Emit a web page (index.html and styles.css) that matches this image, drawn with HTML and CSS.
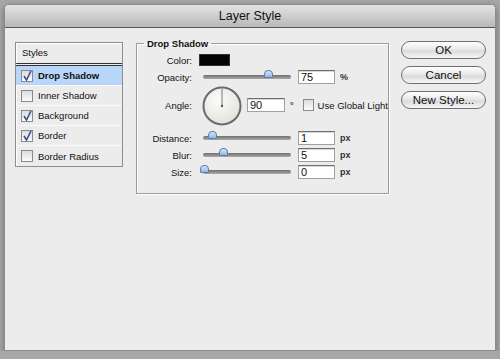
FILE: index.html
```html
<!DOCTYPE html>
<html>
<head>
	<meta charset="utf-8">
	<title>Layer Style</title>
	<link rel="stylesheet" href="styles.css">
</head>
<body>
<div class="window">
	<div class="titlebar">Layer Style</div>
	<div class="content">
		<div class="styles">
			<div class="styles-head">Styles</div>
			<ul class="style-list">
				<li class="selected"><span class="check"><svg width="9" height="10" viewBox="0 0 9 10"><path d="M1 5 L3.5 9 L8 0" fill="none" stroke="#3b4f95" stroke-width="1.6"/></svg></span><b>Drop Shadow</b></li>
				<li><span class="check"></span>Inner Shadow</li>
				<li><span class="check"><svg width="9" height="10" viewBox="0 0 9 10"><path d="M1 5 L3.5 9 L8 0" fill="none" stroke="#3b4f95" stroke-width="1.6"/></svg></span>Background</li>
				<li><span class="check"><svg width="9" height="10" viewBox="0 0 9 10"><path d="M1 5 L3.5 9 L8 0" fill="none" stroke="#3b4f95" stroke-width="1.6"/></svg></span>Border</li>
				<li><span class="check"></span>Border Radius</li>
			</ul>
		</div>

		<fieldset class="group">
			<legend>Drop Shadow</legend>
			<div class="row">
				<label>Color:</label>
				<span class="swatch"></span>
			</div>
			<div class="row">
				<label>Opacity:</label>
				<span class="slider"><span class="thumb" style="left: 61px"></span></span>
				<span class="num">75</span>
				<span class="unit">%</span>
			</div>
			<div class="row angle">
				<label>Angle:</label>
				<svg class="dial" width="40" height="40" viewBox="0 0 40 40">
					<defs>
						<radialGradient id="dialfill" cx="0.4" cy="0.35" r="0.7">
							<stop offset="0" stop-color="#fbfbf8"/>
							<stop offset="1" stop-color="#e2e2dc"/>
						</radialGradient>
					</defs>
					<circle cx="20" cy="20" r="18.5" fill="url(#dialfill)" stroke="#6a6a6a" stroke-width="2"/>
					<line x1="20" y1="20" x2="20" y2="3" stroke="#777" stroke-width="1"/>
					<circle cx="20" cy="20" r="1.2" fill="#555"/>
				</svg>
				<span class="num wide">90</span>
				<span class="unit deg">°</span>
				<span class="box"></span>
				<span class="opt">Use Global Light</span>
			</div>
			<div class="row">
				<label>Distance:</label>
				<span class="slider"><span class="thumb" style="left: 5px"></span></span>
				<span class="num">1</span>
				<span class="unit">px</span>
			</div>
			<div class="row">
				<label>Blur:</label>
				<span class="slider"><span class="thumb" style="left: 16px"></span></span>
				<span class="num">5</span>
				<span class="unit">px</span>
			</div>
			<div class="row">
				<label>Size:</label>
				<span class="slider"><span class="thumb" style="left: -3px"></span></span>
				<span class="num">0</span>
				<span class="unit">px</span>
			</div>
		</fieldset>

		<div class="buttons">
			<button class="btn">OK</button>
			<button class="btn">Cancel</button>
			<button class="btn">New Style...</button>
		</div>
	</div>
</div>
</body>
</html>
```

FILE: styles.css
```css
*{
	padding: 0px;
	margin: 0px;
	box-sizing: border-box;
}
body{
	background-color: #a7a7a7;
	font-family: "Liberation Sans", Arial, sans-serif;
	font-size: 9.5px;
	color: #111;
	padding: 4px 4px 0 4px;
}
.window{
	width: 492px;
	height: 347px;
	background-color: #ececec;
	border: 1px solid #8c8c8c;
	border-radius: 5px 5px 0 0;
	box-shadow: 0 2px 6px rgba(0, 0, 0, 0.35);
}
.titlebar{
	height: 23px;
	line-height: 23px;
	text-align: center;
	font-size: 12.5px;
	color: #111;
	background: linear-gradient(#e4e4e4, #b8b8b8);
	border-bottom: 1px solid #555;
	border-radius: 4px 4px 0 0;
}
.content{
	display: flex;
	align-items: flex-start;
	padding: 9px 9px 0 10px;
}

/* styles list */
.styles{
	width: 108px;
	margin-top: 5px;
	border: 1px solid #8e8e8e;
	background-color: #ececec;
	box-shadow: inset 1px 1px 0 #fff;
}
.styles-head{
	height: 23px;
	line-height: 19px;
	padding-left: 6px;
	border-bottom: 3px double #333;
}
.style-list{
	list-style: none;
}
.style-list li{
	display: flex;
	align-items: center;
	height: 20px;
	padding-left: 5px;
	border-bottom: 1px solid #fafafa;
}
.style-list li:last-child{
	border-bottom: none;
}
.style-list li.selected{
	background-color: #b8d6fa;
}
.check{
	display: flex;
	align-items: center;
	justify-content: center;
	width: 12px;
	height: 12px;
	margin-right: 5px;
	border: 1px solid #8a8a8a;
	background: linear-gradient(#dcdcdc, #fbfbfb);
}

/* drop shadow group */
.group{
	width: 253px;
	margin-left: 13px;
	padding: 3px 0 11px 0;
	border: 1px solid #9c9c9c;
	box-shadow: 1px 1px 0 #fff, inset 1px 1px 0 #fff;
}
.group legend{
	margin-left: 7px;
	padding: 0 3px;
	font-weight: bold;
	line-height: 13px;
}
.row{
	display: flex;
	align-items: center;
	height: 14px;
	margin-bottom: 3px;
}
.row label{
	width: 55px;
	margin-right: 7px;
	text-align: right;
}
.row.angle{
	height: 38px;
	margin-top: -1px;
	margin-bottom: 7px;
}
.swatch{
	width: 31px;
	height: 12px;
	background-color: #050505;
	border: 1px solid #333;
}
.slider{
	position: relative;
	width: 88px;
	height: 4px;
	margin-left: 4px;
	margin-right: 7px;
	border-radius: 2px;
	background: linear-gradient(#6f6f6f, #a9a9a9);
}
.thumb{
	position: absolute;
	top: -5px;
	width: 9px;
	height: 8px;
	border: 1px solid #5c7ea6;
	border-radius: 4px 4px 1px 1px;
	background: linear-gradient(#d3e6fb, #8fb8e6);
}
.num{
	width: 37px;
	height: 14px;
	line-height: 12px;
	padding-left: 2px;
	background-color: #fff;
	border: 1px solid #a0a0a0;
	border-top-color: #6e6e6e;
	box-shadow: inset 0 1px 0 #d8d8d8;
	font-size: 11px;
}
.num.wide{
	width: 38px;
	margin-left: 5px;
}
.unit{
	margin-left: 5px;
	font-size: 9px;
	font-weight: bold;
	color: #333;
}
.dial{
	margin-left: 3px;
	margin-top: 2px;
}
.deg{
	margin-left: 5px;
}
.box{
	width: 11px;
	height: 12px;
	margin-left: 9px;
	border: 1px solid #8a8a8a;
	background: linear-gradient(#dcdcdc, #fbfbfb);
}
.opt{
	margin-left: 4px;
	white-space: nowrap;
}

/* buttons */
.buttons{
	display: flex;
	flex-direction: column;
	gap: 7px;
	width: 85px;
	margin-left: 12px;
	margin-top: 4px;
}
.btn{
	height: 18px;
	border: 1px solid #6f6f6f;
	border-radius: 9px;
	background: linear-gradient(#ffffff, #e6e6e6 50%, #dadada 55%, #f6f6f6);
	font-family: "Liberation Sans", Arial, sans-serif;
	font-size: 11.5px;
	color: #111;
	line-height: 16px;
}
```
